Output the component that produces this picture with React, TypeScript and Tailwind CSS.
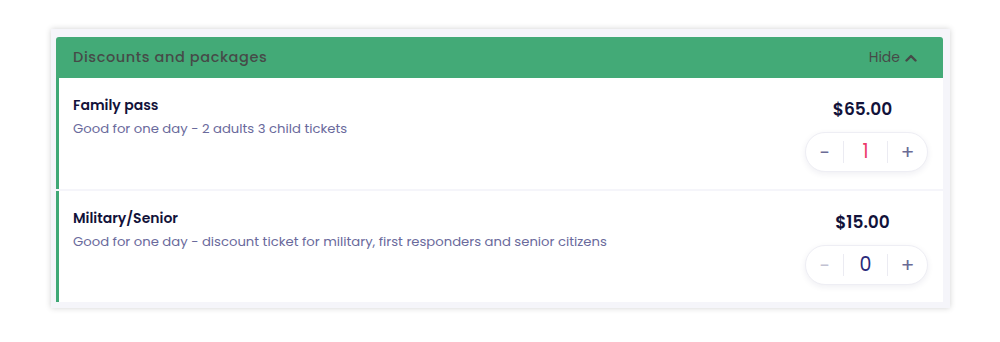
import React from "react";

const font = { fontFamily: "Poppins, 'Inter', 'Noto Sans', sans-serif" };

function Stepper({ value, active }: { value: number; active: boolean }) {
  return (
    <div className="flex h-[40px] w-[123px] items-center rounded-full border border-[#eeeef4] bg-white shadow-[0_2px_6px_rgba(30,30,80,0.07)]">
      <div className={`flex w-[37px] items-center justify-center text-[19px] leading-none ${active ? "text-[#6b6b95]" : "text-[#c2c2d2]"}`}>−</div>
      <div className="h-[22px] w-px bg-[#ebebf2]" />
      <div className={`flex flex-1 items-center justify-center text-[19px] ${active ? "text-[#ec3a6c]" : "text-[#2a2a7a]"}`}>{value}</div>
      <div className="h-[22px] w-px bg-[#ebebf2]" />
      <div className="flex w-[39px] items-center justify-center text-[20px] leading-none text-[#6b6b95]">+</div>
    </div>
  );
}

function Row({ title, desc, price, value }: { title: string; desc: string; price: string; value: number }) {
  return (
    <div className="flex h-[111px] border-l-[3px] border-[#3fa876] bg-white">
      <div className="flex-1 pl-[14px] pt-[17px]">
        <div className="text-[14px] font-semibold leading-[20px] text-[#12123a]">{title}</div>
        <div className="mt-[4px] text-[13.2px] leading-[20px] text-[#6a6a9c]">{desc}</div>
      </div>
      <div className="flex flex-col items-center pr-[15px] pt-[19px]">
        <div className="w-[123px] pr-[8px] text-center text-[17px] font-semibold leading-[24px] text-[#12123a]">{price}</div>
        <div className="mt-[11px]">
          <Stepper value={value} active={value > 0} />
        </div>
      </div>
    </div>
  );
}

export default function App() {
  return (
    <div className="h-[342px] w-[1000px] bg-white pl-[51px] pt-[29px]" style={font}>
      <div className="w-[899px] bg-[#f5f5fa] pb-[6px] pl-[5px] pr-[7px] pt-[8px] shadow-[0_0_6px_rgba(0,0,0,0.18)]">
        <div className="flex h-[41px] items-center justify-between rounded-t-[3px] bg-[#43aa77] pl-[17px] pr-[26px]">
          <div className="text-[14.5px] font-medium tracking-[0.6px] text-[#464a48]">Discounts and packages</div>
          <div className="flex items-center gap-[5px] text-[14px] text-[#464a48]">
            Hide
            <svg width="12" height="8" viewBox="0 0 12 8" fill="none">
              <path d="M1.5 6.5L6 2L10.5 6.5" stroke="#464a48" strokeWidth="2.4" strokeLinecap="round" strokeLinejoin="round" />
            </svg>
          </div>
        </div>
        <div className="flex flex-col gap-[2px]">
          <Row title="Family pass" desc="Good for one day - 2 adults 3 child tickets" price="$65.00" value={1} />
          <Row title="Military/Senior" desc="Good for one day - discount ticket for military, first responders and senior citizens" price="$15.00" value={0} />
        </div>
      </div>
    </div>
  );
}
